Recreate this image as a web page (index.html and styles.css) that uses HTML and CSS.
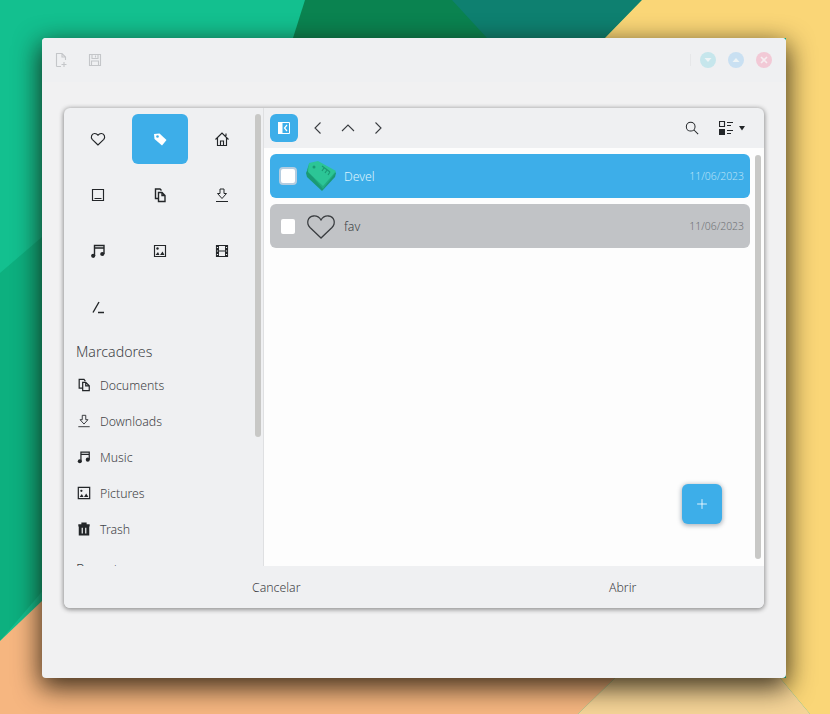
FILE: index.html
```html
<!DOCTYPE html>
<html lang="es">
<head>
<meta charset="utf-8">
<title>Abrir</title>
<link rel="stylesheet" href="styles.css">
</head>
<body>
<svg class="wallpaper" viewBox="0 0 830 714" width="830" height="714" aria-hidden="true">
  <rect width="830" height="714" fill="#13c08f"/>
  <polygon points="0,273 42,237 120,170 120,500 0,641" fill="#0db07f"/>
  <polygon points="305,0 642,0 605,38 293,38" fill="#0a8350"/>
  <polygon points="452,0 642,0 605,38 487,38" fill="#0e8070"/>
  <polygon points="642,0 830,0 830,714 810,714 780,678 786,678 786,38 605,38" fill="#fad677"/>
  <polygon points="0,641 42,601 120,540 700,540 615,678 578,714 0,714" fill="#f6b680"/>
  <polygon points="615,678 780,678 810,714 578,714" fill="#f5d497"/>
</svg>
<main class="window">
  <header class="titlebar">
    <div class="title-tools">
      <svg class="tool-icon" viewBox="0 0 16 16"><path d="M3.500 14.500V1.500H9L12.500 5V8M9 1.500V5H12.500M3.500 14.500H8M11 10V15M8.500 12.500H13.500" /></svg>
      <svg class="tool-icon" viewBox="0 0 16 16"><path d="M2.500 2.500H13.500V13.500H2.500ZM5 2.500V6.500H11V2.500M4.500 13.500V9H11.500V13.500M8.500 3.500V5.500" /></svg>
    </div>
    <div class="controls">
      <span class="divider"></span>
      <span class="control c-min"><svg viewBox="0 0 10 10"><path d="M1.500 3H8.500L5 7Z"/></svg></span>
      <span class="control c-max"><svg viewBox="0 0 10 10"><path d="M1.500 7H8.500L5 3Z"/></svg></span>
      <span class="control c-close"><svg viewBox="0 0 10 10"><path class="x" d="M2 2L8 8M8 2L2 8"/></svg></span>
    </div>
  </header>

  <section class="dialog">
    <div class="dialog-body">
      <aside class="sidebar">
        <div class="places">
          <div class="place"><svg class="ic" viewBox="0 0 16 16"><path d="M8 14L2.200 8.300C0.500 6.300 1.500 2.800 4.500 2.500C6 2.400 7.200 3.100 8 4.300C8.800 3.100 10 2.400 11.500 2.500C14.500 2.800 15.500 6.300 13.800 8.300Z"/></svg></div>
          <div class="place is-active"><svg class="ic" viewBox="0 0 16 16"><path class="fill-white" d="M2 3L7.500 2.500L14.500 9L10 14.500L2.500 8Z"/><circle class="tag-hole" cx="5.500" cy="5.500" r="1.300"/></svg></div>
          <div class="place"><svg class="ic" viewBox="0 0 16 16"><path d="M1.500 8.500L8 2L14.500 8.500M3.500 7V14.500H12.500V7M6.500 14.500V10H9.500V14.500M12 2.500V5"/></svg></div>

          <div class="place"><svg class="ic" viewBox="0 0 16 16"><path d="M2.500 2.500H13.500V13.500H2.500ZM4.500 11.500H11.500"/></svg></div>
          <div class="place"><svg class="ic" viewBox="0 0 16 16"><path class="thick" d="M6.500 11.500H3.500V2H8L9.500 3.500M6.500 5.500H10L13 8.500V14.500H6.500ZM10 5.500V8.500H13"/></svg></div>
          <div class="place"><svg class="ic" viewBox="0 0 16 16"><path class="light" d="M2 14.500H14M6 6.500V2H10V6.500M6 6.500H3.500L8 11.500L12.500 6.500H10"/></svg></div>

          <div class="place"><svg class="ic" viewBox="0 0 16 16"><path class="thick" d="M4.500 13V2.500H14V11M4.500 5H14"/><circle class="fill-dark" cx="3.200" cy="12.800" r="2.100"/><circle class="fill-dark" cx="12.300" cy="11" r="2.100"/></svg></div>
          <div class="place"><svg class="ic" viewBox="0 0 16 16"><path d="M2.500 2.500H13.500V13.500H2.500Z"/><circle class="fill-dark" cx="5.500" cy="5.500" r="1.200"/><path class="fill-dark" d="M3.500 12L6 9L7.500 12ZM8 12L10.500 8.500L12.500 12Z"/></svg></div>
          <div class="place"><svg class="ic" viewBox="0 0 16 16"><path d="M2.500 2.500H13.500V13.500H2.500ZM5 8H11"/><path class="fill-dark" d="M2 2H5V14H2ZM11 2H14V14H11Z"/><path class="holes" d="M3.500 4V5M3.500 7.500V8.500M3.500 11V12M12.500 4V5M12.500 7.500V8.500M12.500 11V12"/></svg></div>

          <div class="place"><svg class="ic" viewBox="0 0 16 16"><path class="thick" d="M9 3L3 13.500M8 13.500H14"/></svg></div>
        </div>

        <h2 class="section-title">Marcadores</h2>
        <ul class="bookmarks">
          <li class="bookmark"><svg class="ic" viewBox="0 0 16 16"><path class="thick" d="M6.500 11.500H2.500V1.500H8L9.500 3.500M6.500 5H10L14 9V14.500H6.500ZM10 5V9H14"/></svg><span>Documents</span></li>
          <li class="bookmark"><svg class="ic" viewBox="0 0 16 16"><path class="light" d="M1.500 14.500H14.500M6 6.500V1.500H10V6.500M6 6.500H3.500L8 11.500L12.500 6.500H10"/></svg><span>Downloads</span></li>
          <li class="bookmark"><svg class="ic" viewBox="0 0 16 16"><path class="thick" d="M4.500 13V2.500H14V11M4.500 5H14"/><circle class="fill-dark" cx="3.200" cy="12.800" r="2.300"/><circle class="fill-dark" cx="12.300" cy="11" r="2.300"/></svg><span>Music</span></li>
          <li class="bookmark"><svg class="ic" viewBox="0 0 16 16"><path class="thick" d="M1.500 1.500H14.500V14.500H1.500Z"/><circle class="fill-dark" cx="5" cy="5.500" r="1.300"/><path class="fill-dark" d="M3 12.500L5.500 9L7.500 12.500ZM8 12.500L10.500 8.500L13 12.500Z"/></svg><span>Pictures</span></li>
          <li class="bookmark"><svg class="ic" viewBox="0 0 16 16"><path class="fill-dark" d="M1.500 2.500H5V0.500H11V2.500H14.500V5H14V15.500H2V5H1.500Z"/><path class="slots" d="M6 6.500V13M10 6.500V13"/></svg><span>Trash</span></li>
        </ul>
        <h2 class="section-title section-remote">Remote</h2>
        <div class="sidebar-scroll"></div>
      </aside>

      <div class="browser">
        <div class="toolbar">
          <button class="tbtn is-on"><svg class="ic ic-panel" viewBox="0 0 16 16"><path class="panel-frame" d="M2.500 2.500H13.500V13.500H2.500Z"/><path class="fill-white" d="M2 2H6.500V14H2Z"/><path class="panel-arrow" d="M11 5L8.500 8L11 11"/></svg></button>
          <div class="nav">
            <svg class="ic" viewBox="0 0 16 16"><path class="fine" d="M10.500 2.500L5 8L10.500 13.500"/></svg>
            <svg class="ic" viewBox="0 0 16 16"><path class="fine" d="M2 11L8 5L14 11"/></svg>
            <svg class="ic" viewBox="0 0 16 16"><path class="fine" d="M5.500 2.500L11 8L5.500 13.500"/></svg>
          </div>
          <div class="toolbar-right">
            <svg class="ic" viewBox="0 0 16 16"><circle cx="6.500" cy="6.500" r="5"/><path d="M10 10L15 15"/></svg>
            <div class="view-switch">
              <svg class="ic" viewBox="0 0 14 14"><path d="M0.500 0.500H5.500V5.500H0.500ZM8 1.500H14M8 4.500H12M8 9.500H14M8 12.500H12"/><path class="fill-dark" d="M0 8H6V14H0Z"/></svg>
              <svg class="caret" viewBox="0 0 8 8"><path d="M1 2H7L4 6.500Z"/></svg>
            </div>
          </div>
        </div>
        <div class="list-pane">
          <div class="row row-selected">
            <span class="check check-focus"></span>
            <svg class="row-icon" viewBox="0 0 32 32">
              <path fill="#1a9a74" d="M1 13L4 6L31 13L30 17L17 31L2 17Z"/>
              <path fill="#22ad83" d="M2 10L4 4L31 12L18 29Z"/>
              <path fill="#2cc596" d="M4 3L13 1L31 11L18 26L3 12Z"/>
              <path d="M17 6L25 12M17 11L19 8M20 13L22 10M23 15L25 12" class="tag-lines"/>
              <circle cx="9" cy="7" r="1.500" fill="#1a9a74"/>
            </svg>
            <span class="row-name">Devel</span>
            <span class="row-date">11/06/2023</span>
          </div>
          <div class="row row-grey">
            <span class="check"></span>
            <svg class="row-icon" viewBox="0 0 32 32"><path class="heart" d="M16 28L5 17.500C1 13.500 2.500 6.500 8.500 6C12 5.700 14.500 7.500 16 10C17.500 7.500 20 5.700 23.500 6C29.500 6.500 31 13.500 27 17.500Z"/></svg>
            <span class="row-name">fav</span>
            <span class="row-date">11/06/2023</span>
          </div>
          <div class="list-scroll"></div>
          <button class="fab"><svg viewBox="0 0 16 16"><path d="M8 1.500V14.500M1.500 8H14.500"/></svg></button>
        </div>
      </div>
    </div>
    <footer class="actions">
      <button class="action action-cancel">Cancelar</button>
      <button class="action action-open">Abrir</button>
    </footer>
  </section>
</main>
</body>
</html>
```

FILE: styles.css
```css
* { box-sizing: border-box; }
html, body { margin: 0; height: 714px; overflow: hidden; }
body {
  position: relative;
  width: 830px;
  padding: 38px 44px 36px 42px;
  font-family: "Noto Sans", "Open Sans", sans-serif;
  font-weight: 300;
  color: #3f4347;
  background: #13c08f;
}
.wallpaper { position: absolute; inset: 0; display: block; }

svg { display: block; fill: none; }
.ic { width: 16px; height: 16px; stroke: #232629; stroke-width: 1.15; flex: none; }
.ic .fill-dark { fill: #232629; stroke: none; }
.ic .fill-white { fill: #fff; stroke: none; }
.ic .thick { stroke-width: 1.4; }
.ic .light { stroke-width: 1; }
.ic .fine { stroke: #3b3e42; stroke-width: 1.1; }
.ic .slots { stroke: #eff0f2; stroke-width: 1.4; }
.ic .holes { stroke: #eff0f2; stroke-width: 1.2; }
.ic .tag-hole { fill: #3daee9; stroke: none; }
.ic .panel-frame { stroke: #fff; stroke-width: 1; }
.ic .panel-arrow { stroke: #fff; stroke-width: 1.2; }

.window {
  position: relative;
  width: 744px;
  height: 640px;
  background: #f1f1f2;
  border-radius: 4px;
  box-shadow: 0 8px 26px 2px rgba(20, 15, 5, .8);
  display: flex;
  flex-direction: column;
}
.titlebar {
  height: 44px;
  flex: none;
  background: #eff0f2;
  border-radius: 4px 4px 0 0;
  display: flex;
  align-items: center;
  justify-content: space-between;
  padding: 0 14px 0 11px;
}
.title-tools { display: flex; gap: 18px; }
.tool-icon { width: 16px; height: 16px; stroke: #c4c6c9; stroke-width: 1.1; }
.controls { display: flex; align-items: center; gap: 12px; }
.divider { width: 1px; height: 12px; margin-right: -3px; background: #e6e7e9; }
.control {
  width: 16px;
  height: 16px;
  border-radius: 50%;
  display: flex;
  align-items: center;
  justify-content: center;
}
.control svg { width: 10px; height: 10px; fill: #eef4f6; }
.control .x { stroke: #f6eef1; stroke-width: 1.6; }
.c-min { background: #c6e6ec; }
.c-max { background: #c9e0f2; }
.c-close { background: #f2c9d6; }

.dialog {
  width: 700px;
  height: 500px;
  margin: 26px 0 0 22px;
  background: #eff0f2;
  border-radius: 6px;
  box-shadow: 0 1px 4px 1px rgba(40, 40, 40, .45);
  display: flex;
  flex-direction: column;
  overflow: hidden;
}
.dialog-body { flex: 1; min-height: 0; display: flex; }

.sidebar {
  position: relative;
  width: 200px;
  flex: none;
  padding: 6px 0 0 6px;
  border-right: 1px solid #dfe0e2;
  overflow: hidden;
}
.places {
  display: grid;
  grid-template-columns: repeat(3, 56px);
  grid-auto-rows: 50px;
  gap: 6px;
}
.place {
  display: flex;
  align-items: center;
  justify-content: center;
  border-radius: 6px;
}
.is-active { background: #3daee9; }
.section-title {
  margin: 0;
  font-size: 14.200px;
  font-weight: 300;
  line-height: 20px;
  color: #3f4347;
}
.sidebar .section-title { margin: 10px 0 0 6px; }
.sidebar .section-remote { margin-top: 13px; }
.bookmarks { list-style: none; margin: 5px 0 0; padding: 0; }
.bookmark {
  height: 36px;
  display: flex;
  align-items: center;
  gap: 9px;
  padding-left: 7px;
  font-size: 12.300px;
}
.bookmark .ic { width: 14px; height: 14px; }
.sidebar-scroll {
  position: absolute;
  left: 191px;
  top: 6px;
  width: 6px;
  height: 323px;
  border-radius: 3px;
  background: #c8c8c6;
}

.browser { flex: 1; min-width: 0; display: flex; flex-direction: column; }
.toolbar {
  height: 40px;
  flex: none;
  display: flex;
  align-items: center;
  padding: 0 18px 0 6px;
}
.tbtn {
  width: 28px;
  height: 28px;
  padding: 0;
  border: 0;
  border-radius: 6px;
  display: flex;
  align-items: center;
  justify-content: center;
  background: transparent;
}
.is-on { background: #3daee9; }
.nav { display: flex; gap: 14px; margin-left: 12px; }
.toolbar-right { margin-left: auto; display: flex; align-items: center; gap: 20px; }
.toolbar-right .ic { width: 14px; height: 14px; }
.view-switch { display: flex; align-items: center; gap: 5px; }
.caret { width: 8px; height: 8px; fill: #232629; }
.caret path { fill: #232629; }

.list-pane {
  position: relative;
  flex: 1;
  min-height: 0;
  background: #fdfdfd;
  padding: 6px 14px 0 6px;
  display: flex;
  flex-direction: column;
  gap: 6px;
}
.row {
  height: 44px;
  border-radius: 6px;
  display: flex;
  align-items: center;
  padding: 0 6px 0 11px;
  font-size: 12.300px;
}
.row-selected { background: #3daee9; color: #dcf2fd; }
.row-grey { background: #c1c3c6; color: #3f4347; }
.check {
  width: 14px;
  height: 15px;
  background: #fff;
  border-radius: 2px;
  flex: none;
}
.check-focus {
  width: 18px;
  height: 18px;
  margin: 0 -2px;
  border: 2px solid #b5cde0;
  border-radius: 4px;
}
.row-icon { width: 32px; height: 32px; margin-left: 10px; flex: none; }
.tag-lines { stroke: #1a9a74; stroke-width: 1.200; }
.heart { stroke: #3a3d40; stroke-width: 1.300; }
.row-name { margin-left: 7px; }
.row-date { margin-left: auto; font-size: 10.400px; }
.row-selected .row-date { color: #b9e2f7; }
.row-grey .row-date { color: #6f7276; }
.list-scroll {
  position: absolute;
  right: 3px;
  top: 7px;
  width: 6px;
  height: 404px;
  border-radius: 3px;
  background: #c8c8c6;
}
.fab {
  position: absolute;
  left: 418px;
  top: 336px;
  width: 40px;
  height: 40px;
  padding: 0;
  border: 0;
  border-radius: 6px;
  background: #3daee9;
  box-shadow: 0 1px 4px 1px rgba(40, 60, 80, .35);
  display: flex;
  align-items: center;
  justify-content: center;
}
.fab svg { width: 12px; height: 12px; stroke: #fff; stroke-width: 1.100; }

.actions {
  height: 42px;
  flex: none;
  display: grid;
  grid-template-columns: 1fr 1fr;
  background: #eff0f2;
}
.action {
  border: 0;
  padding: 0;
  background: transparent;
  font: 300 12.300px "Noto Sans", "Open Sans", sans-serif;
  color: #3f4347;
  display: block;
  text-align: left;
}
.action-cancel { padding-left: 188px; }
.action-open { padding-left: 195px; }
```
